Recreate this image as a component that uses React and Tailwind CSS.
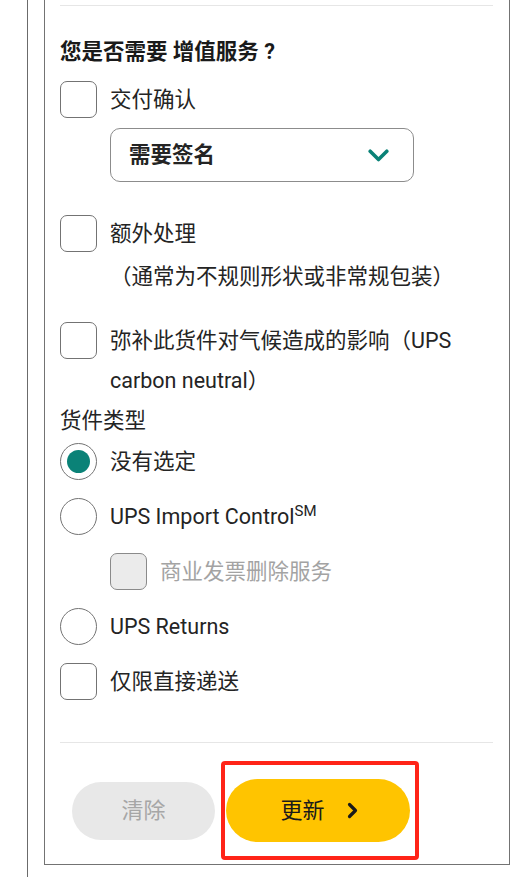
import React from 'react';

// Check box and radio pieces
const Box = ({ disabled }) => (
  <span
    className={
      'block w-[37px] h-[37px] shrink-0 rounded-[7px] border ' +
      (disabled ? 'bg-[#ebebeb] border-[#8a8a8a]' : 'bg-white border-[#737373]')
    }
  />
);

const Radio = ({ checked }) => (
  <span className="flex items-center justify-center w-[37px] h-[37px] shrink-0 rounded-full border border-[#737373] bg-white">
    {checked && <span className="block w-[23px] h-[23px] rounded-full bg-[#0a8277]" />}
  </span>
);

const Row = ({ control, children, className = '' }) => (
  <div className={'flex items-center gap-[13px] h-[37px] ' + className}>
    {control}
    <span className="leading-[37px]">{children}</span>
  </div>
);

export default function App() {
  return (
    <div className="min-h-[877px] bg-white font-['Roboto','Noto_Sans_CJK_SC',sans-serif] text-[21.5px] text-[#242424]">
      <div className="ml-[27px] min-h-[877px] border-l border-[#6b6b6b] pl-[16px]">
        <div className="w-[466px] border-l border-r border-b border-[#737373] px-[15px] pt-[5px] pb-[4px]">
          <div className="h-px bg-[#e6e6e6] mr-px" />

          <h2 className="mt-[31px] font-bold leading-[30px] text-[#1a1a1a]">您是否需要 增值服务 ?</h2>

          <Row control={<Box />} className="mt-[14px]">交付确认</Row>

          {/* Signature dropdown */}
          <div className="ml-[50px] mt-[10px] flex h-[54px] w-[304px] items-center justify-between rounded-[10px] border border-[#8c8c8c] pl-[18px] pr-[24px]">
            <span className="font-bold">需要签名</span>
            <svg width="21" height="13" viewBox="0 0 21 13" fill="none">
              <path d="M2.2 2.2l8.3 8.3 8.3-8.3" stroke="#0a8277" strokeWidth="3.6" strokeLinecap="round" strokeLinejoin="round" />
            </svg>
          </div>

          <div className="mt-[33px] flex items-start gap-[13px]">
            <Box />
            <div>
              <div className="leading-[37px]">额外处理</div>
              <div className="mt-[5px] leading-[40px]">（通常为不规则形状或非常规包装）</div>
            </div>
          </div>

          <div className="mt-[25px] flex items-start gap-[13px]">
            <Box />
            <div className="-mt-px leading-[40px] pr-[4px]">弥补此货件对气候造成的影响（UPS carbon neutral）</div>
          </div>

          <div className="mt-[5px] leading-[30px]">货件类型</div>

          <Row control={<Radio checked />} className="mt-[7px]">没有选定</Row>
          <Row control={<Radio />} className="mt-[18px]">
            UPS Import Control<sup className="text-[15px] relative -top-[8px]">SM</sup>
          </Row>
          <Row control={<Box disabled />} className="mt-[18px] ml-[50px]">
            <span className="text-[#a3a3a3]">商业发票删除服务</span>
          </Row>
          <Row control={<Radio />} className="mt-[18px]">UPS Returns</Row>
          <Row control={<Box />} className="mt-[18px]">仅限直接递送</Row>

          <div className="mt-[42px] h-px bg-[#e6e6e6] mr-px" />

          {/* Actions */}
          <div className="mt-[18px] flex items-center">
            <button className="ml-[12px] h-[58px] w-[143px] rounded-full bg-[#e8e8e8] text-[22px] text-[#a6a6a6]">
              清除
            </button>
            <div className="ml-[6px] rounded-[4px] border-[4px] border-[#ff2418] py-[14px] pl-[1px] pr-[5px]">
              <button className="flex h-[63px] w-[184px] items-center justify-center gap-[22px] rounded-full bg-[#ffc400] text-[22px] text-[#1a1a1a] pl-[2px]">
                <span>更新</span>
                <svg width="11" height="17" viewBox="0 0 11 17" fill="none">
                  <path d="M2.5 2.5l6 6-6 6" stroke="#1a1a1a" strokeWidth="3.2" strokeLinecap="round" strokeLinejoin="round" />
                </svg>
              </button>
            </div>
          </div>
        </div>
      </div>
    </div>
  );
}
